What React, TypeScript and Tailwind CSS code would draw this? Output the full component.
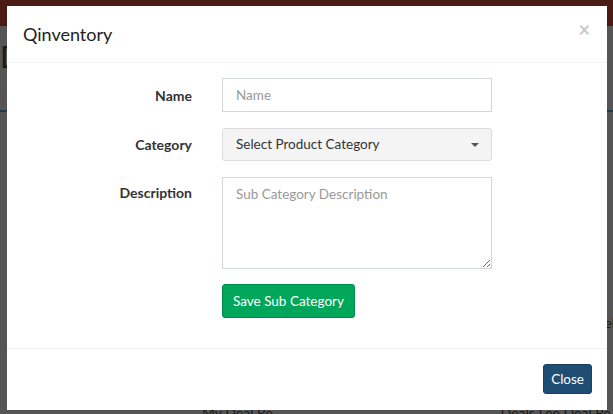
import React from 'react'

const font = { fontFamily: '"Source Sans Pro", Lato, "Liberation Sans", sans-serif' }

function FormRow({ label, top = false, last = false, children }: { label: string; top?: boolean; last?: boolean; children: React.ReactNode }) {
  return (
    <div className={`flex ${top ? 'items-start' : 'items-center'} ${last ? 'mb-[15px]' : 'mb-[16px]'}`}>
      <label className={`w-[170px] shrink-0 text-right text-[14px] font-bold text-[#333] ${top ? 'pt-[5px]' : ''}`}>
        {label}
      </label>
      <div className="ml-[30px] w-[270px]">{children}</div>
    </div>
  )
}

export default function App() {
  return (
    <div className="relative w-[613px] h-[414px] overflow-hidden bg-[#555555]" style={font}>
      {/* page behind the overlay */}
      <div className="h-[26px] bg-[#4a1a15]" />
      <div className="flex flex-col">
        <div className="h-[84px] pt-[10px] text-[30px] leading-[40px] text-[#1a1a1a]">Dr</div>
        <div className="h-[2px] bg-[#1d3b4f]" />
        <div className="h-[200px]" />
        <div className="flex justify-end text-[14px] text-[#1a1a1a]">
          <span className="-mr-[2px]">Del</span>
        </div>
        <div className="h-[69px]" />
        <div className="flex justify-between pl-[202px] pr-[2px] text-[14px] text-[#1a1a1a]">
          <span>My Deal Re</span>
          <span>Deals Lee Deal Re</span>
        </div>
      </div>

      {/* modal */}
      <div className="absolute left-[7px] top-[6px] w-[600px] h-[404px] bg-white flex flex-col">
        <div className="h-[57px] px-[16px] flex items-center justify-between border-b border-[#f4f4f4]">
          <h4 className="text-[18px] text-[#222] leading-none pb-[1px]">Qinventory</h4>
          <span className="text-[20px] font-bold text-[#c8c8c8] leading-none -mt-[10px] mr-[1px]">×</span>
        </div>
        <div className="pt-[15px] px-[15px] pb-[15px] border-b border-[#f4f4f4]">
          <FormRow label="Name">
            <input
              placeholder="Name"
              className="w-full h-[34px] border border-[#d2d6de] px-[13px] text-[13.5px] text-[#555] placeholder:text-[#999] outline-none"
            />
          </FormRow>
          <FormRow label="Category">
            <div className="w-full h-[33px] rounded-[3px] border border-[#dddddd] bg-[#f4f4f4] pl-[13px] pr-[12px] flex items-center justify-between text-[13.5px] text-[#333]">
              <span>Select Product Category</span>
              <span className="w-0 h-0 border-x-[4px] border-x-transparent border-t-[4px] border-t-[#555]" />
            </div>
          </FormRow>
          <FormRow label="Description" top last>
            <textarea
              placeholder="Sub Category Description"
              className="block w-full h-[92px] border border-[#d2d6de] px-[13px] py-[6px] text-[13.5px] text-[#555] placeholder:text-[#999] outline-none"
            />
          </FormRow>
          <div className="flex">
            <div className="w-[200px] shrink-0" />
            <button className="h-[34px] px-[10px] rounded-[3px] bg-[#00a65a] border border-[#008d4c] text-white text-[13.5px]">
              Save Sub Category
            </button>
          </div>
          <div className="h-[15px]" />
        </div>
        <div className="flex-1 flex items-start justify-end pt-[15px] px-[15px]">
          <button className="h-[30px] px-[7px] rounded-[3px] bg-[#204d74] border border-[#1a3f60] text-white text-[13.5px]">
            Close
          </button>
        </div>
      </div>
    </div>
  )
}
